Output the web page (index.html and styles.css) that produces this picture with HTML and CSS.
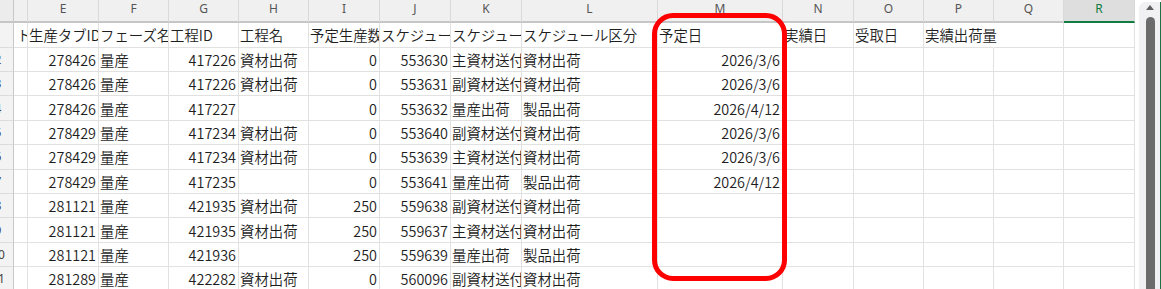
FILE: index.html
```html
<!DOCTYPE html>
<html lang="ja">
<head>
<meta charset="utf-8">
<title>Sheet</title>
<link rel="stylesheet" href="styles.css">
</head>
<body>
<div class="sheet">
  <div class="grid">
    <div class="h corner"></div><div class="h"></div><div class="h">E</div><div class="h">F</div><div class="h">G</div><div class="h">H</div><div class="h">I</div><div class="h">J</div><div class="h">K</div><div class="h">L</div><div class="h">M</div><div class="h">N</div><div class="h">O</div><div class="h">P</div><div class="h">Q</div><div class="h sel">R</div>

    <div class="rh">1</div><div class="c d">ト</div><div class="c">生産タブID</div><div class="c">フェーズ名</div><div class="c">工程ID</div><div class="c">工程名</div><div class="c">予定生産数</div><div class="c">スケジュールID</div><div class="c">スケジュール名</div><div class="c">スケジュール区分</div><div class="c">予定日</div><div class="c">実績日</div><div class="c">受取日</div><div class="c ov">実績出荷量</div><div class="c"></div><div class="c"></div>

    <div class="rh">2</div><div class="c"></div><div class="c r">278426</div><div class="c">量産</div><div class="c r">417226</div><div class="c">資材出荷</div><div class="c r">0</div><div class="c r">553630</div><div class="c">主資材送付</div><div class="c">資材出荷</div><div class="c r">2026/3/6</div><div class="c"></div><div class="c"></div><div class="c"></div><div class="c"></div><div class="c"></div>

    <div class="rh">3</div><div class="c"></div><div class="c r">278426</div><div class="c">量産</div><div class="c r">417226</div><div class="c">資材出荷</div><div class="c r">0</div><div class="c r">553631</div><div class="c">副資材送付</div><div class="c">資材出荷</div><div class="c r">2026/3/6</div><div class="c"></div><div class="c"></div><div class="c"></div><div class="c"></div><div class="c"></div>

    <div class="rh">4</div><div class="c"></div><div class="c r">278426</div><div class="c">量産</div><div class="c r">417227</div><div class="c"></div><div class="c r">0</div><div class="c r">553632</div><div class="c">量産出荷</div><div class="c">製品出荷</div><div class="c r">2026/4/12</div><div class="c"></div><div class="c"></div><div class="c"></div><div class="c"></div><div class="c"></div>

    <div class="rh">5</div><div class="c"></div><div class="c r">278429</div><div class="c">量産</div><div class="c r">417234</div><div class="c">資材出荷</div><div class="c r">0</div><div class="c r">553640</div><div class="c">副資材送付</div><div class="c">資材出荷</div><div class="c r">2026/3/6</div><div class="c"></div><div class="c"></div><div class="c"></div><div class="c"></div><div class="c"></div>

    <div class="rh">6</div><div class="c"></div><div class="c r">278429</div><div class="c">量産</div><div class="c r">417234</div><div class="c">資材出荷</div><div class="c r">0</div><div class="c r">553639</div><div class="c">主資材送付</div><div class="c">資材出荷</div><div class="c r">2026/3/6</div><div class="c"></div><div class="c"></div><div class="c"></div><div class="c"></div><div class="c"></div>

    <div class="rh">7</div><div class="c"></div><div class="c r">278429</div><div class="c">量産</div><div class="c r">417235</div><div class="c"></div><div class="c r">0</div><div class="c r">553641</div><div class="c">量産出荷</div><div class="c">製品出荷</div><div class="c r">2026/4/12</div><div class="c"></div><div class="c"></div><div class="c"></div><div class="c"></div><div class="c"></div>

    <div class="rh">8</div><div class="c"></div><div class="c r">281121</div><div class="c">量産</div><div class="c r">421935</div><div class="c">資材出荷</div><div class="c r">250</div><div class="c r">559638</div><div class="c">副資材送付</div><div class="c">資材出荷</div><div class="c r"></div><div class="c"></div><div class="c"></div><div class="c"></div><div class="c"></div><div class="c"></div>

    <div class="rh">9</div><div class="c"></div><div class="c r">281121</div><div class="c">量産</div><div class="c r">421935</div><div class="c">資材出荷</div><div class="c r">250</div><div class="c r">559637</div><div class="c">主資材送付</div><div class="c">資材出荷</div><div class="c r"></div><div class="c"></div><div class="c"></div><div class="c"></div><div class="c"></div><div class="c"></div>

    <div class="rh">10</div><div class="c"></div><div class="c r">281121</div><div class="c">量産</div><div class="c r">421936</div><div class="c"></div><div class="c r">250</div><div class="c r">559639</div><div class="c">量産出荷</div><div class="c">製品出荷</div><div class="c r"></div><div class="c"></div><div class="c"></div><div class="c"></div><div class="c"></div><div class="c"></div>

    <div class="rh">11</div><div class="c"></div><div class="c r">281289</div><div class="c">量産</div><div class="c r">422282</div><div class="c">資材出荷</div><div class="c r">0</div><div class="c r">560096</div><div class="c">副資材送付</div><div class="c">資材出荷</div><div class="c r"></div><div class="c"></div><div class="c"></div><div class="c"></div><div class="c"></div><div class="c"></div>
  </div>
  <div class="vscroll">
    <div class="track">
      <div class="arrow"></div>
      <div class="thumb"></div>
    </div>
  </div>
  <div class="highlight"></div>
</div>
</body>
</html>
```

FILE: styles.css
```css
html, body {
  margin: 0;
  padding: 0;
  background: #ffffff;
}

.sheet {
  position: relative;
  width: 1161px;
  height: 289px;
  overflow: hidden;
  display: flex;
  background: #ffffff;
  font-family: "Noto Sans CJK JP", "Noto Sans", sans-serif;
}

.grid {
  display: grid;
  flex: none;
  margin-left: -20px;
  grid-template-columns: 34px 14px 71px 70px 70px 70px 71px 71px 71px 136px 125px 71px 70px 70px 70px 71px;
  grid-template-rows: 23px 24.6px repeat(10, 24.4px);
}

.h {
  box-sizing: border-box;
  background: #f0f0f0;
  border-right: 1px solid #d9d9d9;
  border-bottom: 2px solid #c6c6c6;
  font-family: "Noto Sans", "Liberation Sans", sans-serif;
  font-size: 12px;
  line-height: 17px;
  color: #555555;
  text-align: center;
}

.h.corner {
  background: #ececec;
  border-right: 1px solid #c8c8c8;
}

.h.sel {
  background: #dedede;
  color: #107c41;
  border-bottom: 2px solid #107c41;
}

.rh {
  box-sizing: border-box;
  background: #f3f3f3;
  border-right: 1px solid #c8c8c8;
  border-bottom: 1px solid #dcdcdc;
  display: flex;
  align-items: center;
  justify-content: center;
  padding-left: 3px;
  font-family: "Noto Sans", "Liberation Sans", sans-serif;
  font-size: 12px;
  color: #444444;
  overflow: hidden;
  white-space: nowrap;
}

.c {
  box-sizing: border-box;
  border-right: 1px solid #e1e1e1;
  border-bottom: 1px solid #e1e1e1;
  display: flex;
  align-items: center;
  padding: 0 2px 0 1px;
  overflow: hidden;
  white-space: nowrap;
  font-size: 14.4px;
  font-weight: 350;
  color: #1e1e1e;
}

.c.r {
  justify-content: flex-end;
}

.c.d {
  padding-left: 3px;
}

.c.ov {
  overflow: visible;
  border-right-color: transparent;
}

.vscroll {
  flex: none;
  width: 26px;
  height: 289px;
  box-sizing: border-box;
  padding-left: 4px;
  display: flex;
}

.track {
  flex: 1;
  margin-top: 2px;
  background: #f1f0f3;
  border-radius: 6px 0 0 0;
  border-right: 1px solid #1e7145;
  display: flex;
  flex-direction: column;
  padding-left: 7px;
}

.arrow {
  width: 0;
  height: 0;
  margin-top: 3px;
  border-left: 4px solid transparent;
  border-right: 4px solid transparent;
  border-bottom: 5px solid #606060;
}

.thumb {
  flex: 1;
  width: 9px;
  margin-top: 7px;
  background: #6b6b6b;
  border-radius: 4.5px 4.5px 0 0;
}

.highlight {
  position: absolute;
  left: 652px;
  top: 13px;
  width: 135px;
  height: 268px;
  box-sizing: border-box;
  border: 5px solid #ff0000;
  border-radius: 21px;
  pointer-events: none;
}
```
